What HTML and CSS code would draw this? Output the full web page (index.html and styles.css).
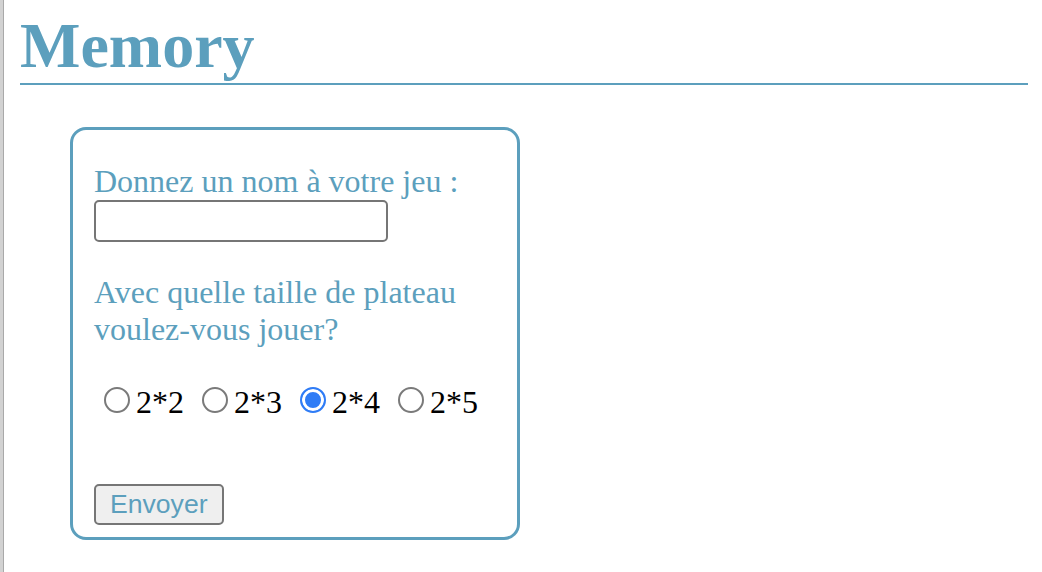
FILE: index.html
```html
<!DOCTYPE html>
<html lang="fr">
<head>
<meta charset="utf-8">
<title>Memory</title>
<link rel="stylesheet" href="styles.css">
</head>
<body>
<h1 class="title">Memory</h1>
<form class="card">
  <div class="field">
    <label class="field-label" for="nom">Donnez un nom à votre jeu :</label>
    <input class="text-input" type="text" id="nom" name="nom">
  </div>
  <p class="question">Avec quelle taille de plateau voulez-vous jouer?</p>
  <div class="choices"><input class="radio" type="radio" name="taille" id="t22"><label class="choice" for="t22">2*2</label> <input class="radio" type="radio" name="taille" id="t23"><label class="choice" for="t23">2*3</label> <input class="radio" type="radio" name="taille" id="t24" checked><label class="choice" for="t24">2*4</label> <input class="radio" type="radio" name="taille" id="t25"><label class="choice" for="t25">2*5</label></div>
  <button class="submit" type="submit">Envoyer</button>
</form>
</body>
</html>
```

FILE: styles.css
```css
html {
  background: linear-gradient(to right, #d2d2d2 0, #d2d2d2 3px, #a9a9a9 3px, #a9a9a9 4px, #ffffff 4px) no-repeat;
  background-color: #ffffff;
  min-height: 100%;
}

body {
  margin: 0 14px 0 20px;
  padding-top: 9px;
  font-family: "Liberation Serif", "Times New Roman", serif;
  color: #5c9fbd;
}

.title {
  margin: 0;
  font-size: 64px;
  line-height: 74px;
  font-weight: bold;
  color: #5c9fbd;
  border-bottom: 2px solid #5c9fbd;
}

.card {
  width: 402px;
  margin: 42px 0 0 50px;
  padding: 33px 21px 12px 21px;
  border: 3px solid #5c9fbd;
  border-radius: 16px;
  font-size: 32px;
  line-height: 37px;
}

.field-label {
  display: block;
}

.text-input {
  display: block;
  box-sizing: border-box;
  width: 294px;
  height: 42px;
  margin: 0;
  padding: 2px 6px;
  border: 2px solid #767676;
  border-radius: 5px;
  background: #ffffff;
  font-size: 26px;
}

.question {
  margin: 32px 0 0 0;
}

.choices {
  margin-top: 36px;
  color: #000000;
  white-space: nowrap;
}

.radio {
  appearance: none;
  -webkit-appearance: none;
  box-sizing: border-box;
  width: 26px;
  height: 26px;
  margin: 3px 6px 0 10px;
  vertical-align: top;
  border: 2px solid #7a7a7a;
  border-radius: 50%;
  background: #ffffff;
}

.radio:checked {
  border-color: #2f7cf6;
  background: #2f7cf6;
  box-shadow: inset 0 0 0 3px #ffffff;
}

.submit {
  display: block;
  box-sizing: border-box;
  height: 41px;
  margin: 63px 0 0 0;
  padding: 0 14px;
  border: 2px solid #767676;
  border-radius: 5px;
  background: #efefef;
  color: #5c9fbd;
  font-family: "Liberation Sans", Arial, sans-serif;
  font-size: 26.6px;
  line-height: 37px;
}
```
